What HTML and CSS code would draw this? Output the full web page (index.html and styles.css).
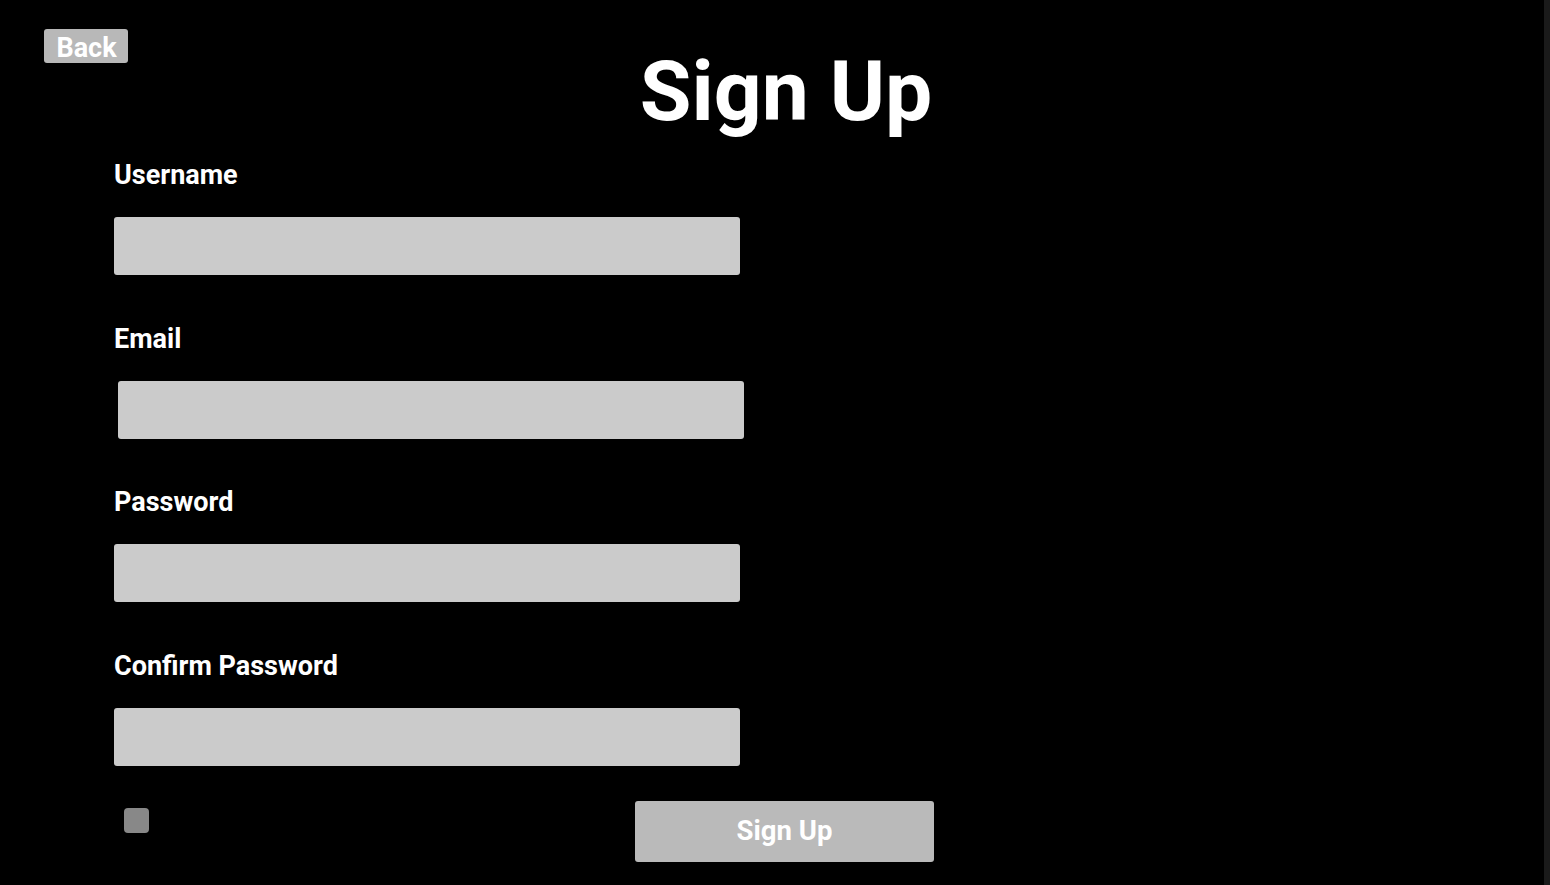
FILE: index.html
```html
<!DOCTYPE html>
<html lang="en">
<head>
<meta charset="utf-8">
<title>Sign Up</title>
<link rel="stylesheet" href="styles.css">
</head>
<body>
<div class="page">
  <main class="main">
    <header class="header">
      <button class="back-btn" type="button">Back</button>
      <h1 class="title">Sign Up</h1>
    </header>
    <form class="form">
      <div class="field">
        <label class="label" for="username">Username</label>
        <input class="input" id="username" type="text">
      </div>
      <div class="field">
        <label class="label" for="email">Email</label>
        <input class="input input-shift" id="email" type="email">
      </div>
      <div class="field">
        <label class="label" for="password">Password</label>
        <input class="input" id="password" type="password">
      </div>
      <div class="field">
        <label class="label" for="confirm">Confirm Password</label>
        <input class="input" id="confirm" type="password">
      </div>
      <div class="actions">
        <span class="checkbox"></span>
        <button class="submit-btn" type="button">Sign Up</button>
      </div>
    </form>
  </main>
  <div class="scroll-strip"></div>
</div>
</body>
</html>
```
FILE: styles.css
```css
html, body {
  margin: 0;
  padding: 0;
  background: #000;
  height: 100%;
  overflow: hidden;
}
body {
  font-family: Roboto, "Liberation Sans", sans-serif;
  color: #fff;
}
.page {
  display: flex;
  height: 885px;
}
.main {
  flex: 1;
  min-width: 0;
}
.scroll-strip {
  width: 6px;
  background: #1a1a1a;
}
.header {
  display: grid;
}
.back-btn {
  grid-area: 1 / 1;
  justify-self: start;
  align-self: start;
  box-sizing: border-box;
  margin: 29px 0 0 44px;
  width: 84px;
  height: 34px;
  padding: 4px 0 0 1px;
  border: none;
  border-radius: 3px;
  background: #b8b8b8;
  color: #fff;
  font-family: inherit;
  font-weight: 700;
  font-size: 27px;
  line-height: 30px;
}
.title {
  grid-area: 1 / 1;
  margin: 43px 0 0 0;
  padding-left: 28px;
  text-align: center;
  font-size: 84px;
  font-weight: 700;
  line-height: 98px;
}
.form {
  display: flex;
  flex-direction: column;
  gap: 47.67px;
  padding: 18px 0 0 114px;
}
.field {
  display: flex;
  flex-direction: column;
  align-items: flex-start;
  gap: 26px;
}
.label {
  font-size: 27px;
  font-weight: 700;
  line-height: 32px;
}
.input {
  box-sizing: border-box;
  width: 626px;
  height: 58px;
  margin: 0;
  border: none;
  border-radius: 3px;
  background: #cbcbcb;
}
.input-shift {
  margin-left: 4px;
}
.actions {
  display: flex;
  align-items: flex-start;
  margin-top: -13px;
}
.checkbox {
  width: 25px;
  height: 25px;
  margin: 7px 0 0 10px;
  border-radius: 4px;
  background: #888;
}
.submit-btn {
  box-sizing: border-box;
  margin-left: 486px;
  width: 299px;
  height: 61px;
  padding: 0 0 2px 0;
  border: none;
  border-radius: 3px;
  background: #bababa;
  color: #fff;
  font-family: inherit;
  font-weight: 700;
  font-size: 27.5px;
}
```
